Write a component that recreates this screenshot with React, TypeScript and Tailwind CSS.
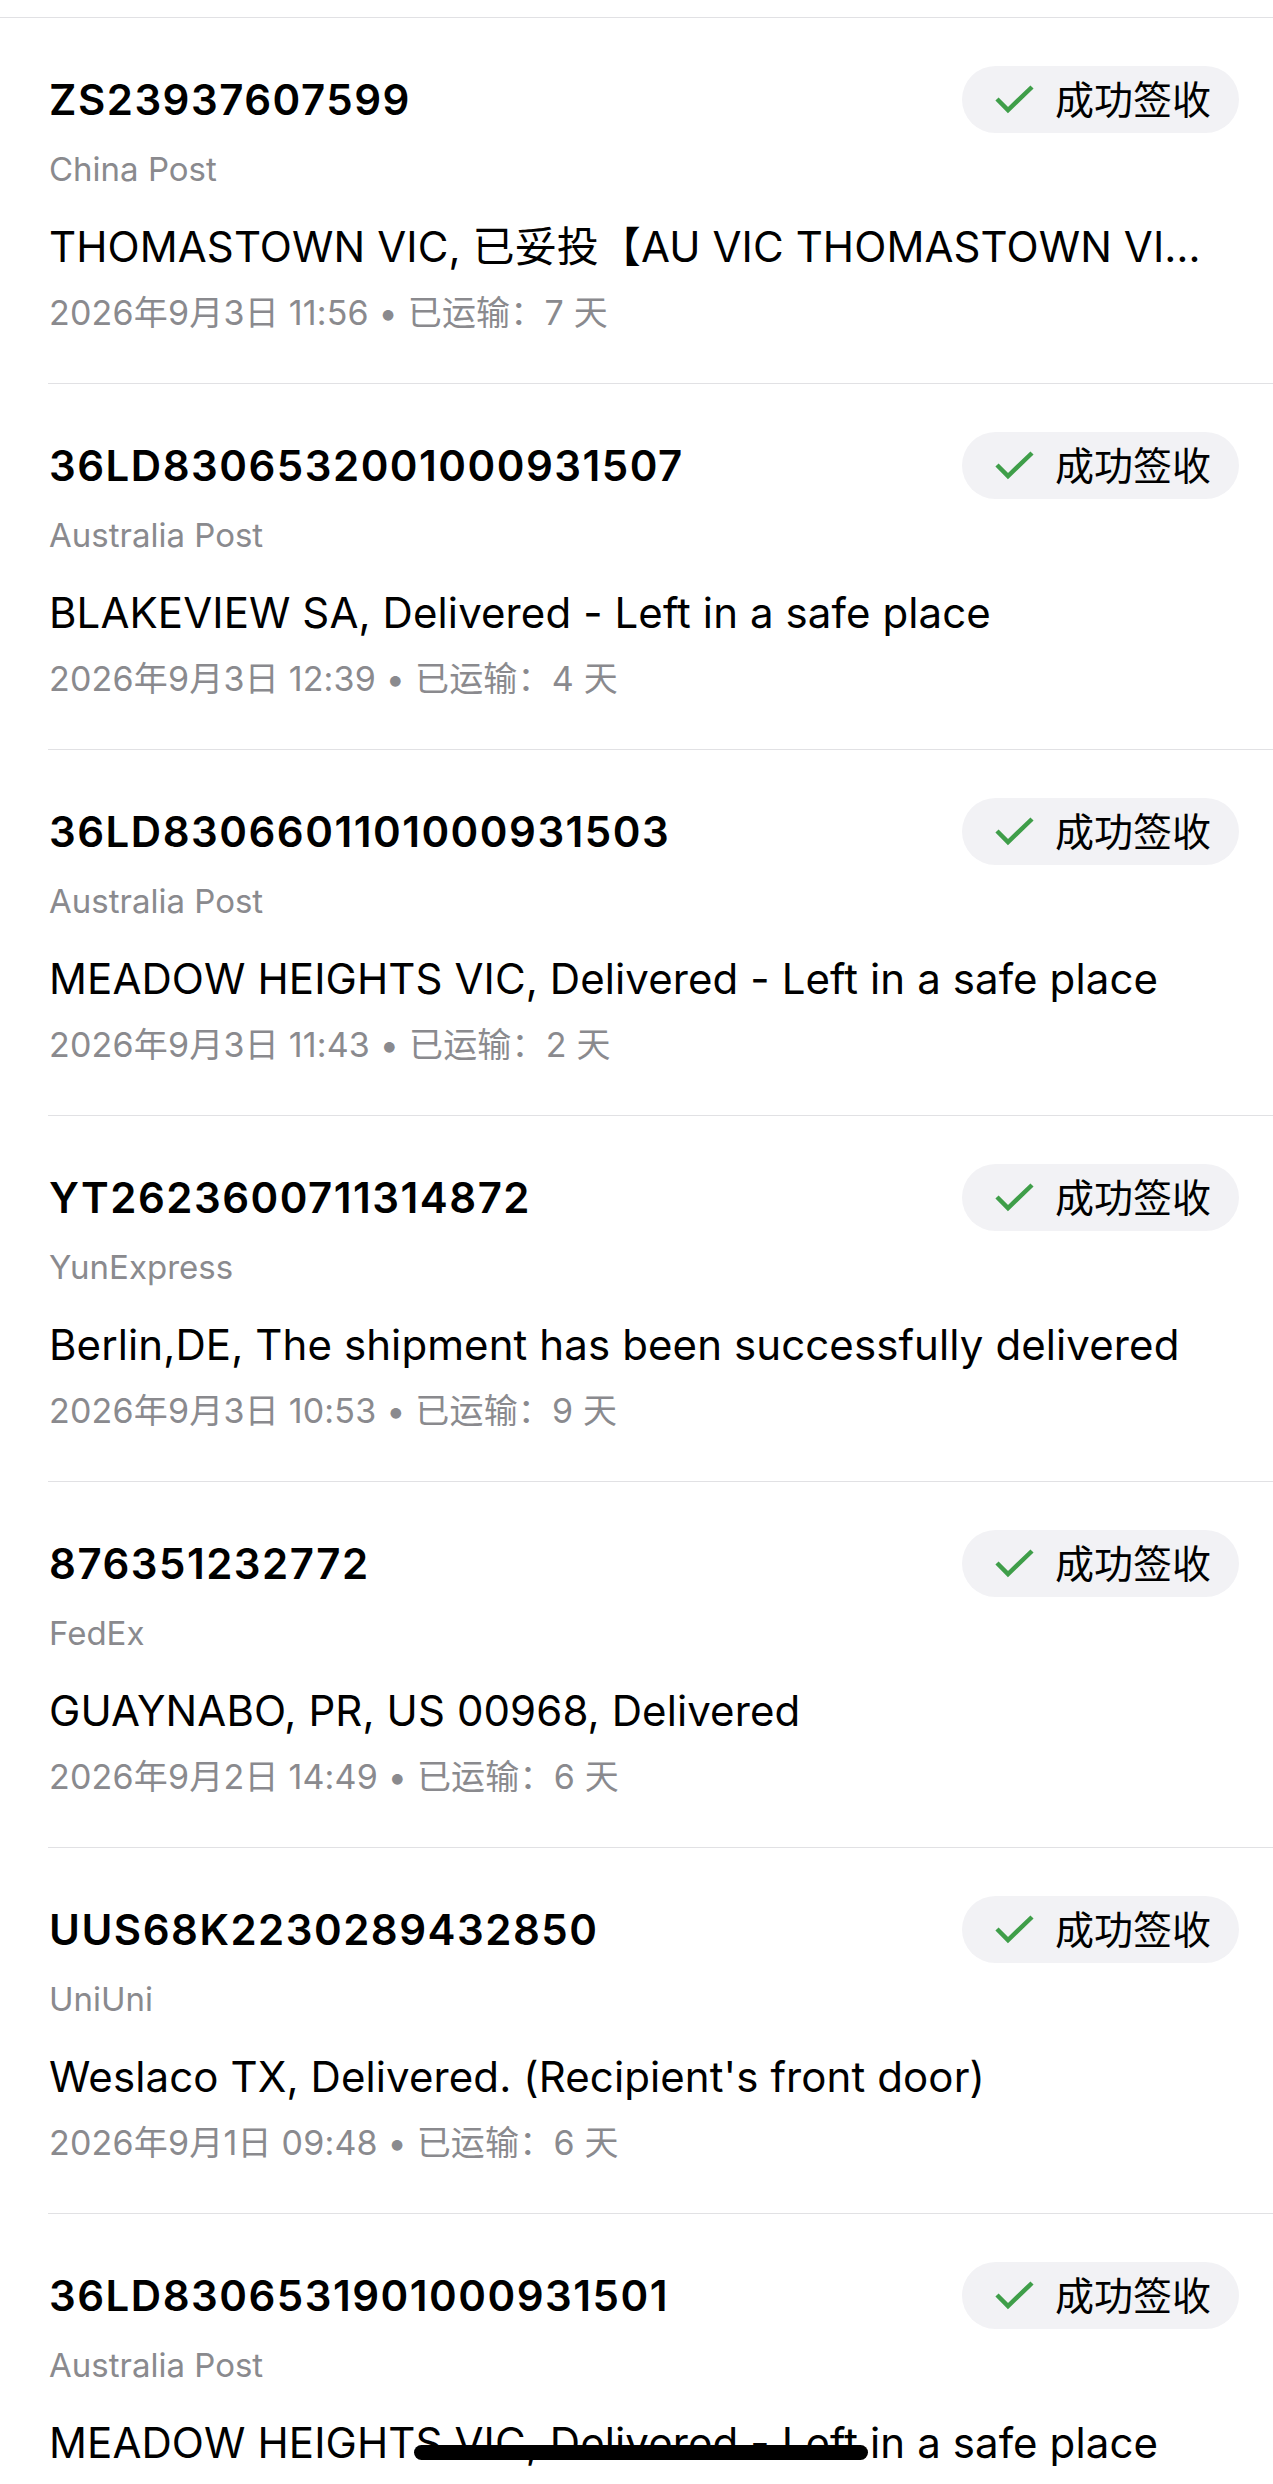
import React from "react";

type Item = {
  no: string;
  carrier: string;
  desc: string;
  date: string;
  days: string;
};

const items: Item[] = [
  {
    no: "ZS23937607599",
    carrier: "China Post",
    desc: "THOMASTOWN VIC, 已妥投【AU VIC THOMASTOWN VIC 3074】",
    date: "2026年9月3日 11:56",
    days: "7",
  },
  {
    no: "36LD8306532001000931507",
    carrier: "Australia Post",
    desc: "BLAKEVIEW SA, Delivered - Left in a safe place",
    date: "2026年9月3日 12:39",
    days: "4",
  },
  {
    no: "36LD8306601101000931503",
    carrier: "Australia Post",
    desc: "MEADOW HEIGHTS VIC, Delivered - Left in a safe place",
    date: "2026年9月3日 11:43",
    days: "2",
  },
  {
    no: "YT2623600711314872",
    carrier: "YunExpress",
    desc: "Berlin,DE, The shipment has been successfully delivered",
    date: "2026年9月3日 10:53",
    days: "9",
  },
  {
    no: "876351232772",
    carrier: "FedEx",
    desc: "GUAYNABO, PR, US 00968, Delivered",
    date: "2026年9月2日 14:49",
    days: "6",
  },
  {
    no: "UUS68K2230289432850",
    carrier: "UniUni",
    desc: "Weslaco TX, Delivered. (Recipient's front door)",
    date: "2026年9月1日 09:48",
    days: "6",
  },
  {
    no: "36LD8306531901000931501",
    carrier: "Australia Post",
    desc: "MEADOW HEIGHTS VIC, Delivered - Left in a safe place",
    date: "2026年9月1日 09:12",
    days: "5",
  },
];

function Badge() {
  return (
    <div className="flex h-[67px] w-[277px] shrink-0 items-center rounded-full bg-[#f2f2f5] pl-[33px]">
      <svg width="40" height="30" viewBox="0 0 40 30" fill="none" className="shrink-0">
        <polyline
          points="2,14 13,25 37,2"
          stroke="#3f9e49"
          strokeWidth="4.5"
          strokeLinecap="butt"
          strokeLinejoin="miter"
        />
      </svg>
      <span className="ml-[20px] text-[39px] leading-none text-black">成功签收</span>
    </div>
  );
}

function Row({ item, first }: { item: Item; first: boolean }) {
  return (
    <div className={first ? "border-t border-[#e1e1e4]" : "ml-[48px] border-t border-[#e1e1e4]"}>
      <div className={first ? "pl-[49px] pr-[34px] pt-[48px] pb-[49px]" : "pl-[1px] pr-[34px] pt-[48px] pb-[49px]"}>
        <div className="flex items-center justify-between">
          <div className="text-[42px] font-semibold leading-[50px] tracking-[1.5px] text-black">{item.no}</div>
          <Badge />
        </div>
        <div className="mt-[16px] text-[33px] leading-[40px] text-[#8a8a8e]">{item.carrier}</div>
        <div className="mt-[33px] truncate pr-[12px] text-[42px] leading-[50px] tracking-[0.1px] text-black">
          {item.desc}
        </div>
        <div className="mt-[20px] text-[34px] leading-[42px] tracking-[0.2px] text-[#8a8a8e]">
          {item.date} • 已运输：{item.days} 天
        </div>
      </div>
    </div>
  );
}

export default function App() {
  return (
    <div
      className="relative h-[2484px] w-[1273px] overflow-hidden bg-white"
      style={{ fontFamily: 'Inter, "Noto Sans CJK SC", sans-serif' }}
    >
      <div className="h-[17px]" />
      {items.map((it, i) => (
        <Row key={i} item={it} first={i === 0} />
      ))}
      <div className="absolute left-[414px] top-[2445px] h-[15px] w-[454px] rounded-full bg-black" />
    </div>
  );
}
